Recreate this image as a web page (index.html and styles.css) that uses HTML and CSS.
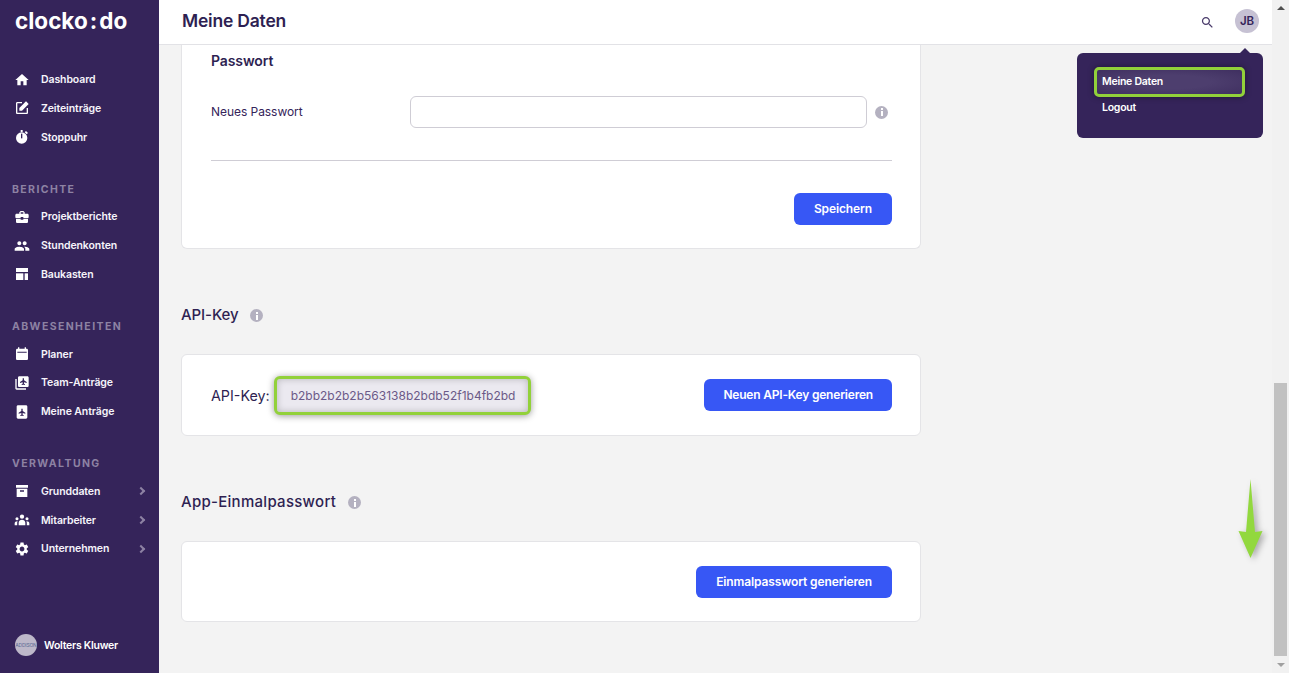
FILE: index.html
```html
<!DOCTYPE html>
<html lang="de">
<head>
<meta charset="utf-8">
<title>Meine Daten</title>
<link rel="stylesheet" href="styles.css">
</head>
<body>
<div class="app">
  <aside class="sidebar">
    <div class="logo">clocko<span class="logo-colon">:</span>do</div>
    <nav class="nav">
      <div class="group">
        <a class="item"><svg viewBox="0 0 24 24"><path d="M10 20v-6h4v6h5v-8h3L12 3 2 12h3v8z"/></svg>Dashboard</a>
        <a class="item"><svg viewBox="0 0 24 24"><path d="M19 19H5V5h7V3H5c-1.100 0-2 .9-2 2v14c0 1.100.9 2 2 2h14c1.100 0 2-.9 2-2v-7h-2v7z"/><path d="M18 2l4 4-10 10H8v-4z"/></svg>Zeiteinträge</a>
        <a class="item"><svg viewBox="0 0 24 24"><circle cx="11.500" cy="13.500" r="8.500"/><rect x="10" y="1.500" width="3" height="3"/><path d="M18 3l3 3-2 2-3-3z"/><rect x="10.500" y="7" width="2" height="7" fill="#35245a"/></svg>Stoppuhr</a>
      </div>
      <div class="group">
        <div class="label">BERICHTE</div>
        <a class="item"><svg viewBox="0 0 24 24"><path d="M10 16v-1H3.010L3 19c0 1.110.89 2 2 2h14c1.110 0 2-.89 2-2v-4h-7v1h-4zm10-9h-4.010V5l-2-2h-4l-2 2v2H4c-1.100 0-2 .9-2 2v3c0 1.110.89 2 2 2h6v-2h4v2h6c1.100 0 2-.9 2-2V9c0-1.100-.9-2-2-2zm-6 0h-4V5h4v2z"/></svg>Projektberichte</a>
        <a class="item"><svg viewBox="0 0 24 24"><path d="M16 11c1.660 0 2.990-1.340 2.990-3S17.660 5 16 5c-1.660 0-3 1.340-3 3s1.340 3 3 3zm-8 0c1.660 0 2.990-1.340 2.990-3S9.660 5 8 5C6.340 5 5 6.340 5 8s1.340 3 3 3zm0 2c-2.330 0-7 1.170-7 3.500V19h14v-2.500c0-2.330-4.670-3.500-7-3.500zm8 0c-.29 0-.62.02-.97.05 1.160.84 1.970 1.970 1.970 3.450V19h6v-2.500c0-2.330-4.670-3.500-7-3.500z"/></svg>Stundenkonten</a>
        <a class="item"><svg viewBox="0 0 24 24"><rect x="3" y="3" width="18" height="6"/><rect x="3" y="11" width="11" height="10"/><rect x="16" y="11" width="5" height="10"/></svg>Baukasten</a>
      </div>
      <div class="group">
        <div class="label">ABWESENHEITEN</div>
        <a class="item"><svg viewBox="0 0 24 24"><path fill-rule="evenodd" d="M19 4h-1V2h-2v2H8V2H6v2H5C3.900 4 3 4.900 3 6v13c0 1.100.9 2 2 2h14c1.100 0 2-.9 2-2V6c0-1.100-.9-2-2-2zM5 8.500h14V10H5z"/></svg>Planer</a>
        <a class="item"><svg viewBox="0 0 24 24"><path d="M4 6H2v14c0 1.100.9 2 2 2h14v-2H4V6z"/><path fill-rule="evenodd" d="M20 2H8c-1.100 0-2 .9-2 2v12c0 1.100.9 2 2 2h12c1.100 0 2-.9 2-2V4c0-1.100-.9-2-2-2zM13 5h2v3l4 2.500V12l-4-1v2l1.500 1v1L14 14.500 11.500 15v-1l1.500-1v-2l-4 1v-1.500L13 8z"/></svg>Team-Anträge</a>
        <a class="item"><svg viewBox="0 0 24 24"><path fill-rule="evenodd" d="M18 2H6c-1.100 0-2 .9-2 2v16c0 1.100.9 2 2 2h12c1.100 0 2-.9 2-2V4c0-1.100-.9-2-2-2zM11 7h2v3.500l4 2.500v1.500l-4-1V16l1.500 1v1L12 17.500 9.500 18v-1l1.500-1v-2.500l-4 1V13l4-2.500z"/></svg>Meine Anträge</a>
      </div>
      <div class="group">
        <div class="label">VERWALTUNG</div>
        <a class="item"><svg viewBox="0 0 24 24"><path fill-rule="evenodd" d="M3 3h18v4H3zM4 8.500h16V21H4zM9 11v2h6v-2z"/></svg>Grunddaten<span class="chev"></span></a>
        <a class="item"><svg viewBox="0 0 24 24"><circle cx="12" cy="7" r="3.200"/><circle cx="4.500" cy="10" r="2.300"/><circle cx="19.500" cy="10" r="2.300"/><path d="M7 20v-4c0-3 2.500-4.500 5-4.500s5 1.500 5 4.500v4zM1 20v-3c0-2 1.500-3 4.500-3-.5.8-.7 1.500-.7 2.500V20zM23 20v-3c0-2-1.500-3-4.500-3 .5.8.7 1.500.7 2.500V20z"/></svg>Mitarbeiter<span class="chev"></span></a>
        <a class="item"><svg viewBox="0 0 24 24"><path d="M19.140 12.940c.04-.3.06-.61.06-.94 0-.32-.02-.64-.07-.94l2.030-1.580c.18-.14.23-.41.12-.61l-1.920-3.320c-.12-.22-.37-.29-.59-.22l-2.390.96c-.5-.38-1.030-.7-1.620-.94l-.36-2.540c-.04-.24-.24-.41-.48-.41h-3.840c-.24 0-.43.17-.47.41l-.36 2.540c-.59.24-1.130.57-1.620.94l-2.390-.96c-.22-.08-.47 0-.59.22L2.740 8.870c-.12.21-.08.47.12.61l2.030 1.580c-.05.3-.09.63-.09.94s.02.64.07.94l-2.030 1.580c-.18.14-.23.41-.12.61l1.920 3.320c.12.22.37.29.59.22l2.390-.96c.5.38 1.030.7 1.620.94l.36 2.540c.05.24.24.41.48.41h3.840c.24 0 .44-.17.47-.41l.36-2.540c.59-.24 1.130-.56 1.620-.94l2.390.96c.22.08.47 0 .59-.22l1.920-3.320c.12-.22.07-.47-.12-.61l-2.010-1.580zM12 15.600c-1.980 0-3.600-1.620-3.600-3.600s1.620-3.600 3.600-3.600 3.600 1.620 3.600 3.600-1.620 3.600-3.600 3.600z"/></svg>Unternehmen<span class="chev"></span></a>
      </div>
    </nav>
    <div class="company"><span class="company-logo">ADDISON</span>Wolters Kluwer</div>
  </aside>

  <div class="main">
    <header class="topbar">
      <h1>Meine Daten</h1>
      <svg class="search" viewBox="0 0 24 24"><path d="M15.500 14h-.79l-.28-.27C15.410 12.590 16 11.110 16 9.500 16 5.910 13.090 3 9.500 3S3 5.910 3 9.500 5.910 16 9.500 16c1.610 0 3.090-.59 4.230-1.570l.27.28v.79l5 4.990L20.490 19l-4.990-5zm-6 0C7.010 14 5 11.990 5 9.500S7.010 5 9.500 5 14 7.010 14 9.500 11.990 14 9.500 14z"/></svg>
      <span class="avatar">JB</span>
    </header>
    <main class="content">
      <section class="card card-top">
        <h3>Passwort</h3>
        <div class="field">
          <label>Neues Passwort</label>
          <div class="input"></div>
          <span class="info"></span>
        </div>
        <hr class="rule">
        <div class="actions"><button class="btn">Speichern</button></div>
      </section>

      <h2 class="heading heading-api">API-Key <span class="info"></span></h2>
      <section class="card card-row">
        <span class="key-label">API-Key:</span>
        <span class="key">b2bb2b2b2b563138b2bdb52f1b4fb2bd</span>
        <button class="btn btn-key push">Neuen API-Key generieren</button>
      </section>

      <h2 class="heading heading-app">App-Einmalpasswort <span class="info"></span></h2>
      <section class="card card-row card-app">
        <button class="btn push">Einmalpasswort generieren</button>
      </section>
    </main>
  </div>

  <div class="scrollbar">
    <span class="arrow-up"></span>
    <span class="track"><span class="thumb"></span></span>
    <span class="arrow-down"></span>
  </div>

  <div class="menu">
    <a class="menu-item active">Meine Daten</a>
    <a class="menu-item">Logout</a>
  </div>

  <svg class="annot-arrow" viewBox="0 0 30 86"><path d="M14.500 2 L19 55 L26.500 54 L14.500 81 L2.500 54 L10 55 Z"/></svg>
</div>
</body>
</html>
```
FILE: styles.css
```css
* { box-sizing: border-box; }
html, body { margin: 0; height: 100%; overflow: hidden; }
body { font-family: Inter, "Liberation Sans", sans-serif; color: #2e1f52; background: #f3f3f3; }

.app { position: relative; display: flex; height: 673px; width: 1289px; overflow: hidden; }

.sidebar { flex: 0 0 159px; background: #35245a; color: #fff; display: flex; flex-direction: column; }
.logo { height: 45px; padding-left: 15px; font-size: 22.500px; font-weight: 700; line-height: 42px; letter-spacing: 0; }
.logo-colon { margin: 0 2px; }
.nav { padding-top: 20.400px; }
.group { margin-bottom: 23.200px; }
.label { height: 28px; line-height: 30px; padding-left: 12px; font-size: 10.500px; font-weight: 700; letter-spacing: 1.400px; color: #8d82a3; }
.item { display: flex; align-items: center; height: 28.700px; padding: 0 12px 0 14px; font-size: 10.500px; font-weight: 600; letter-spacing: -.1px; color: #f6f4fa; }
.item svg { width: 16px; height: 16px; margin-right: 11px; fill: #fff; flex: none; }
.chev { margin-left: auto; width: 6px; height: 6px; border-top: 2px solid #8d82a3; border-right: 2px solid #8d82a3; transform: rotate(45deg); margin-right: 3px; }
.company { margin-top: auto; display: flex; align-items: center; height: 22px; margin-bottom: 17px; padding-left: 15px; font-size: 10.500px; font-weight: 600; letter-spacing: -.25px; }
.company-logo { width: 22px; height: 22px; border-radius: 50%; background: #bdb8c9; color: #5a6a95; font-size: 5px; font-weight: 400; letter-spacing: -.2px; display: flex; align-items: center; justify-content: center; margin-right: 7px; overflow: hidden; }

.main { flex: 1; min-width: 0; display: flex; flex-direction: column; }
.topbar { flex: 0 0 45px; background: #fff; border-bottom: 1px solid #e2e2e6; display: flex; align-items: center; padding: 0 13px 3px 23px; }
.topbar h1 { margin: 0; font-size: 17.500px; font-weight: 600; letter-spacing: -.2px; color: #2e1f52; flex: 1; }
.search { width: 15px; height: 15px; fill: #4a3b6b; margin-right: 20px; margin-top: 3px; }
.avatar { width: 24px; height: 24px; border-radius: 50%; background: #c6c1d3; color: #35245a; font-size: 11.500px; font-weight: 600; display: flex; align-items: center; justify-content: center; }

.content { flex: 1; padding-left: 22px; width: 762px; }
.card { background: #fff; border: 1px solid #e4e4e7; border-radius: 6px; }
.card-top { border-top: 0; border-radius: 0 0 6px 6px; height: 204px; padding: 6px 28px 0 29px; }
.card-top h3 { margin: 0; font-size: 14px; font-weight: 600; line-height: 20px; color: #2e1f52; letter-spacing: -.1px; }
.field { display: flex; align-items: center; margin-top: 25px; height: 32px; position: relative; }
.field label { flex: 0 0 199px; font-size: 12px; color: #35245a; letter-spacing: -.05px; padding-bottom: 2px; }
.input { width: 457px; height: 32px; border: 1px solid #cfcdd5; border-radius: 6px; background: #fff; }
.field .info { margin-left: 8px; }
.rule { margin: 32px 0 32px; border: 0; border-top: 1px solid #cfcdd5; }
.actions { display: flex; justify-content: flex-end; }
.btn { height: 32px; padding: 0 20px 1px; border: 0; border-radius: 6px; background: #3757f5; color: #fff; font-family: inherit; font-size: 12px; font-weight: 600; letter-spacing: -.12px; }
.btn-key { padding: 0 19px 1px; letter-spacing: -.2px; }
.push { margin-left: auto; }

.info { display: inline-block; position: relative; width: 13px; height: 13px; border-radius: 50%; background: #b4b1c0; vertical-align: -2px; flex: none; }
.info::before { content: ""; position: absolute; left: 5.500px; top: 2.500px; width: 2px; height: 2px; background: #fff; }
.info::after { content: ""; position: absolute; left: 5.500px; top: 5.500px; width: 2px; height: 5px; background: #fff; }

.heading { margin: 0; font-size: 15px; font-weight: 500; line-height: 20px; letter-spacing: -.1px; color: #2e1f52; }
.heading .info { margin-left: 8px; }
.heading-api { margin-top: 56px; margin-bottom: 29px; }
.heading-app { margin-top: 56px; margin-bottom: 29px; letter-spacing: .28px; }
.heading-app .info { margin-left: 8px; }
.card-row { display: flex; align-items: center; height: 82px; padding: 0 28px 0 29px; }
.card-app { height: 81px; }
.key-label { font-size: 14.300px; color: #2e1f52; margin-right: 4px; }
.key { display: flex; align-items: center; width: 257px; height: 39px; padding-left: 14px; border: 3px solid #92d13a; border-radius: 6px; background: #ebe9f0; color: #6b5a88; font-size: 12px; box-shadow: 0 1px 7px rgba(0,0,0,.4), inset 0 0 7px rgba(0,0,0,.22); }

.scrollbar { flex: 0 0 17px; background: #f1f1f1; display: flex; flex-direction: column; align-items: center; }
.arrow-up { margin: 6px 0 6px; width: 0; height: 0; border: 4px solid transparent; border-top: 0; border-bottom: 4px solid #505050; }
.track { flex: 1; width: 100%; padding-top: 367px; display: flex; flex-direction: column; align-items: center; }
.thumb { width: 13px; height: 273px; background: #c1c1c1; }
.arrow-down { margin: 6px 0 6px; width: 0; height: 0; border: 4px solid transparent; border-bottom: 0; border-top: 4px solid #a0a0a0; }

.menu { position: absolute; left: 1077px; top: 53px; width: 186px; height: 85px; padding: 14px 17px; border-radius: 6px; background: #35245a; color: #fff; }
.menu::before { content: ""; position: absolute; right: 12px; top: -5px; width: 0; height: 0; border: 6px solid transparent; border-top: 0; border-bottom: 6px solid #35245a; }
.menu-item { display: block; padding-left: 8px; font-size: 10.500px; line-height: 14px; font-weight: 600; letter-spacing: -.25px; }
.menu-item.active { width: 151px; height: 30px; margin-bottom: 4px; padding-left: 5px; line-height: 23px; border: 3px solid #92d13a; border-radius: 5px; background: radial-gradient(ellipse at center, #4d3e6e 40%, #3f2f60 100%); box-shadow: 0 0 6px rgba(0,0,0,.4); }

.annot-arrow { position: absolute; left: 1236px; top: 477px; width: 30px; height: 86px; fill: #92d83e; filter: drop-shadow(3px 2px 3px rgba(0,0,0,.3)); }
```
